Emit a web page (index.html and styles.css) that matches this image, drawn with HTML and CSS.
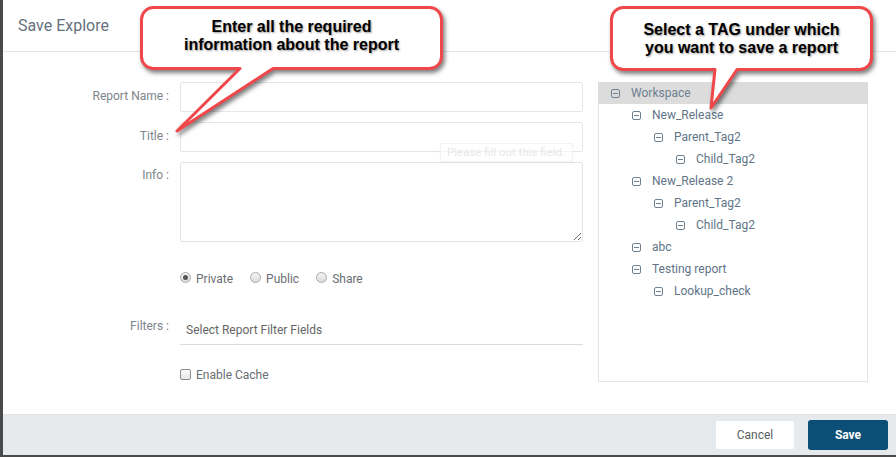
FILE: index.html
```html
<!DOCTYPE html>
<html>
<head>
<meta charset="utf-8">
<title>Save Explore</title>
<link rel="stylesheet" href="styles.css">
</head>
<body>
<div class="modal">
  <header class="modal-header">
    <h1 class="modal-title">Save Explore</h1>
  </header>
  <div class="modal-body">
    <form class="form">
      <div class="row">
        <label class="label">Report Name :</label>
        <input class="input" type="text">
      </div>
      <div class="row row-gap">
        <label class="label">Title :</label>
        <input class="input" type="text">
      </div>
      <div class="row row-gap">
        <label class="label label-info">Info :</label>
        <textarea class="textarea"></textarea>
      </div>
      <div class="row row-radios">
        <span class="label"></span>
        <div class="radios">
          <span class="radio-item"><span class="radio checked"></span>Private</span>
          <span class="radio-item"><span class="radio"></span>Public</span>
          <span class="radio-item"><span class="radio"></span>Share</span>
        </div>
      </div>
      <div class="row row-filters">
        <label class="label label-filters">Filters :</label>
        <div class="select">Select Report Filter Fields</div>
      </div>
      <div class="row row-cache">
        <span class="label"></span>
        <span class="check-item"><span class="checkbox"></span>Enable Cache</span>
      </div>
    </form>
    <div class="tree">
      <div class="node selected lvl0"><span class="tog"></span>Workspace</div>
      <div class="node lvl1"><span class="tog"></span>New_Release</div>
      <div class="node lvl2"><span class="tog"></span>Parent_Tag2</div>
      <div class="node lvl3"><span class="tog"></span>Child_Tag2</div>
      <div class="node lvl1"><span class="tog"></span>New_Release 2</div>
      <div class="node lvl2"><span class="tog"></span>Parent_Tag2</div>
      <div class="node lvl3"><span class="tog"></span>Child_Tag2</div>
      <div class="node lvl1"><span class="tog"></span>abc</div>
      <div class="node lvl1"><span class="tog"></span>Testing report</div>
      <div class="node lvl2"><span class="tog"></span>Lookup_check</div>
    </div>
  </div>
  <footer class="modal-footer">
    <button class="btn btn-cancel" type="button">Cancel</button>
    <button class="btn btn-save" type="button">Save</button>
  </footer>
</div>

<div class="tooltip">Please fill out this field.</div>

<div class="callout callout-left">
  <svg class="callout-shape" width="330" height="140" viewBox="0 0 330 140">
    <path d="M23.5 7.5 H299.5 A12 12 0 0 1 311.5 19.5 V56.5 A12 12 0 0 1 299.5 68.5 H143 L47 131 L110 68.5 H23.5 A12 12 0 0 1 11.5 56.5 V19.5 A12 12 0 0 1 23.5 7.5 Z"/>
  </svg>
  <div class="callout-text">Enter all the required<br>information about the report</div>
</div>

<div class="callout callout-right">
  <svg class="callout-shape" width="290" height="120" viewBox="0 0 290 120">
    <path d="M23.5 7.5 H259.5 A12 12 0 0 1 271.5 19.5 V57.5 A12 12 0 0 1 259.5 69.5 H137 L111 108 L115 69.5 H23.5 A12 12 0 0 1 11.5 57.5 V19.5 A12 12 0 0 1 23.5 7.5 Z"/>
  </svg>
  <div class="callout-text">Select a TAG under which<br>you want to save a report</div>
</div>
</body>
</html>
```
FILE: styles.css
```css
html, body {
  margin: 0;
  padding: 0;
}
body {
  background: #4a4a4a;
  width: 896px;
  height: 457px;
  overflow: hidden;
  font-family: Roboto, "Liberation Sans", sans-serif;
  position: relative;
}
.modal {
  margin-left: 3px;
  width: 893px;
  height: 455px;
  background: #ffffff;
  display: flex;
  flex-direction: column;
}
.modal-header {
  height: 51px;
  border-bottom: 1px solid #e3e5e7;
  box-sizing: content-box;
  display: flex;
  align-items: center;
  padding-left: 15px;
}
.modal-title {
  margin: 0;
  font-weight: 400;
  font-size: 16px;
  color: #66727c;
  padding-bottom: 0;
}
.modal-body {
  flex: 1;
  display: flex;
  padding-top: 30px;
}
.form {
  display: flex;
  flex-direction: column;
  width: 580px;
}
.row {
  display: flex;
  align-items: flex-start;
}
.row-gap { margin-top: 10px; }
.label {
  width: 166px;
  flex: none;
  margin-right: 11px;
  text-align: right;
  font-size: 12px;
  line-height: 16px;
  padding-top: 6px;
  color: #7d858c;
}
.label-info { padding-top: 5px; }
.input {
  width: 403px;
  height: 30px;
  box-sizing: border-box;
  border: 1px solid #e2e8ea;
  border-radius: 2px;
  margin: 0;
  padding: 0 6px;
  font: inherit;
  background: #fff;
}
.textarea {
  width: 403px;
  height: 80px;
  box-sizing: border-box;
  border: 1px solid #dfe5e8;
  border-radius: 2px;
  margin: 0;
  padding: 6px;
  font: inherit;
  display: block;
}
.row-radios {
  margin-top: 26px;
  height: 20px;
}
.row-radios .label, .row-cache .label { padding-top: 0; }
.radios {
  display: flex;
  gap: 17px;
  align-items: center;
  height: 20px;
}
.radio-item, .check-item {
  display: flex;
  align-items: center;
  font-size: 12px;
  color: #6a6e72;
  height: 20px;
  padding-top: 1px;
}
.radio {
  width: 11px;
  height: 11px;
  border-radius: 50%;
  box-sizing: border-box;
  border: 1px solid #a8a8a8;
  background: linear-gradient(#f4f4f4, #dcdcdc);
  margin-right: 5px;
  position: relative;
  margin-top: -2px;
}
.radio.checked::after {
  content: "";
  position: absolute;
  left: 2px;
  top: 2px;
  width: 5px;
  height: 5px;
  border-radius: 50%;
  background: #555;
}
.row-filters {
  margin-top: 27px;
}
.label-filters { padding-top: 3px; }
.select {
  width: 403px;
  height: 30px;
  box-sizing: border-box;
  border-bottom: 1px solid #dcdcdc;
  font-size: 12px;
  color: #666;
  padding-left: 6px;
  display: flex;
  align-items: center;
}
.row-cache {
  margin-top: 19px;
  height: 20px;
}
.checkbox {
  width: 11px;
  height: 11px;
  box-sizing: border-box;
  border: 1px solid #8d8d8d;
  border-radius: 2px;
  background: linear-gradient(#fbfbfb, #e6e6e6);
  margin-right: 5px;
  margin-top: -2px;
}
.tree {
  margin-left: 15px;
  width: 270px;
  height: 300px;
  box-sizing: border-box;
  border: 1px solid #e4e4e4;
  border-top: none;
}
.node {
  height: 22px;
  display: flex;
  align-items: center;
  font-size: 12px;
  color: #617487;
  white-space: nowrap;
}
.node.selected {
  background: #dcdcdc;
  color: #6f8091;
  margin: 0 -1px;
  padding-left: 1px;
}
.lvl0 { padding-left: 12px; }
.lvl1 { padding-left: 33px; }
.lvl2 { padding-left: 55px; }
.lvl3 { padding-left: 77px; }
.node.selected.lvl0 { padding-left: 13px; }
.tog {
  width: 9px;
  height: 9px;
  box-sizing: border-box;
  border: 1px solid #6f8191;
  border-radius: 2px;
  margin-right: 11px;
  position: relative;
  flex: none;
}
.tog::after {
  content: "";
  position: absolute;
  left: 1px;
  right: 1px;
  top: 3px;
  height: 1px;
  background: #6f8191;
}
.modal-footer {
  height: 41px;
  box-sizing: border-box;
  border-top: 1px solid #dfe3e6;
  background: #e6eaed;
  display: flex;
  align-items: center;
  justify-content: flex-end;
  padding-right: 8px;
  gap: 14px;
}
.btn {
  font-family: Roboto, "Liberation Sans", sans-serif;
  font-size: 12px;
  border: none;
  margin: 0;
  cursor: pointer;
}
.btn-cancel {
  width: 78px;
  height: 28px;
  background: #fff;
  color: #5b5f63;
  border-radius: 2px;
}
.btn-save {
  width: 80px;
  height: 30px;
  background: #0b4f76;
  color: #fff;
  font-weight: 700;
  border-radius: 3px;
}
.tooltip {
  position: absolute;
  left: 440px;
  top: 143px;
  width: 133px;
  height: 19px;
  box-sizing: border-box;
  border: 1px solid #f1f3f4;
  box-shadow: 0 1px 2px rgba(0,0,0,0.03);
  font-size: 11.5px;
  color: #e6e8e9;
  padding-left: 6px;
  line-height: 17px;
  white-space: nowrap;
  background: rgba(255,255,255,0.6);
}
.callout {
  position: absolute;
  top: 0;
}
.callout-left { left: 130px; width: 330px; height: 140px; }
.callout-right { left: 600px; width: 290px; height: 120px; }
.callout-shape {
  display: block;
  overflow: visible;
  filter: drop-shadow(2px 3px 2px rgba(0,0,0,0.5));
}
.callout-shape path {
  fill: #ffffff;
  stroke: #f0474a;
  stroke-width: 3;
  stroke-linejoin: round;
}
.callout-text {
  position: absolute;
  font-family: "Liberation Sans", Arial, sans-serif;
  font-weight: 700;
  font-size: 16px;
  line-height: 18px;
  color: #000;
  text-align: center;
  text-shadow: 1px 1px 2px rgba(0,0,0,0.4);
  white-space: nowrap;
}
.callout-left .callout-text { left: 11px; width: 301px; top: 18px; }
.callout-right .callout-text { left: 11px; width: 261px; top: 21px; }
```
